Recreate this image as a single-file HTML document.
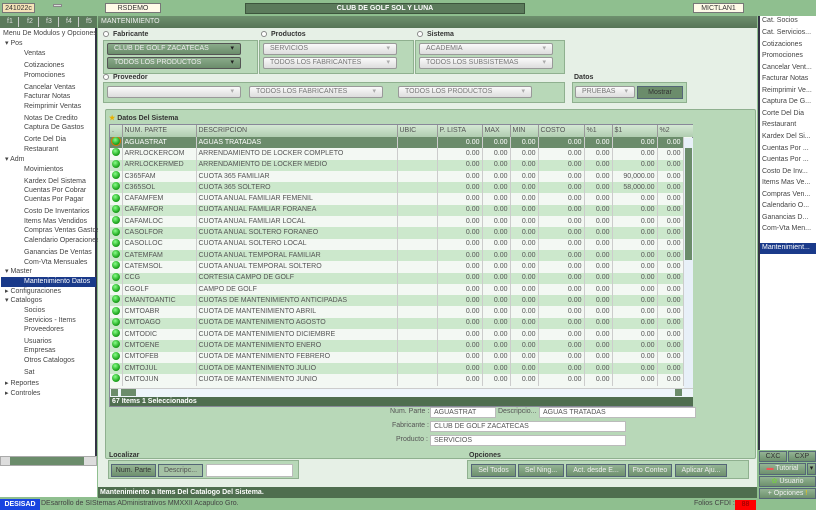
<!DOCTYPE html>
<html><head><meta charset="utf-8"><style>
*{margin:0;padding:0;box-sizing:border-box}
body{width:816px;height:510px;overflow:hidden;background:#8fbf8f;font-family:"Liberation Sans",sans-serif;font-size:7px;color:#555;position:relative}
.a{position:absolute;white-space:nowrap}
.box{position:absolute;background:#fffbe8;border:1px solid #777;text-align:center;font-size:7px;color:#333;line-height:9px}
.tree div{position:absolute;white-space:nowrap;line-height:10px;color:#444}
.rl div{position:absolute;left:4px;white-space:nowrap;line-height:10px;color:#444}
.dd{position:absolute;height:12px;border:1px solid #999;border-radius:2px;background:linear-gradient(#fafafa,#ddd);color:#777;font-size:7px;line-height:10px;padding-left:6px}
.dd:after{content:"▾";position:absolute;right:6px;top:0;color:#aaa}
.dd.g{background:linear-gradient(#8aaa8a,#6b8c6b);color:#eee;border-color:#555}
.dd.g:after{color:#222}
.grp{position:absolute;background:#b8d8b8;border:1px solid #8fb08f}
.lbl{position:absolute;font-weight:bold;color:#333;font-size:7px}
.rad{display:inline-block;width:6px;height:6px;border:1px solid #888;border-radius:50%;background:#fff;margin-right:4px;vertical-align:-1px}
table{border-collapse:collapse;table-layout:fixed;position:absolute;left:110px;top:125px;width:573px}
td{height:11.3px;padding:0 2px;border-right:1px solid #ccc;overflow:hidden;white-space:nowrap;line-height:10px;color:#555;font-size:7px}
td.n{text-align:right}
tr:nth-child(even) td{background:#cce8cc}
tr:nth-child(odd) td{background:#f3f8f3}
tr.h td{background:linear-gradient(#d4e8d4,#b0cdb0);color:#555;border-right:1px solid #999;height:12px}
tr.s td{background:#6b8c6b;color:#fff}
.dot{display:inline-block;width:8px;height:8px;border-radius:50%;background:radial-gradient(circle at 40% 35%,#8f8,#2a2 60%,#161);vertical-align:-1px}
.btn{position:absolute;height:13px;border:1px solid #567;background:linear-gradient(#93b393,#6e906e);color:#eee;text-align:center;line-height:11px;font-size:7px}
.inp{position:absolute;height:11px;background:#fff;border:1px solid #bbb;font-size:7px;line-height:9px;padding-left:3px;color:#555}
.tab{position:absolute;top:17px;color:#ddd;line-height:10px}
.sep{position:absolute;top:17px;width:1px;height:10px;background:#ccc}
</style></head><body>
<!-- top bar -->
<div class="box" style="left:2px;top:3px;width:33px;height:10px;background:#f5e3b8">241022c</div>
<div class="a" style="left:53px;top:4px;width:9px;height:3px;background:#ddd;border:1px solid #888"></div>
<div class="box" style="left:105px;top:3px;width:56px;height:10px">RSDEMO</div>
<div class="a" style="left:245px;top:3px;width:280px;height:11px;background:#5b7a5b;border:1px solid #3d553d;color:#fff;font-weight:bold;text-align:center;line-height:9px">CLUB DE GOLF SOL Y LUNA</div>
<div class="box" style="left:693px;top:3px;width:51px;height:10px">MICTLAN1</div>

<!-- left -->
<div class="a" style="left:0;top:16px;width:97px;height:12px;background:#5b7a5b"></div>
<div class="tab" style="left:7px">f1</div><div class="sep" style="left:18px"></div>
<div class="tab" style="left:27px">f2</div><div class="sep" style="left:38px"></div>
<div class="tab" style="left:46px">f3</div><div class="sep" style="left:58px"></div>
<div class="tab" style="left:66px">f4</div><div class="sep" style="left:78px"></div>
<div class="tab" style="left:86px">f5</div>
<div class="a" style="left:0;top:28px;width:97px;height:428px;background:#fff;border-right:2px solid #334"></div>
<div class="tree">
<div style="left:3px;top:29px">Menu De Modulos y Opciones</div>
<div style="left:5px;top:39px">▾ Pos</div>
<div style="left:24px;top:49px">Ventas</div>
<div style="left:24px;top:61px">Cotizaciones</div>
<div style="left:24px;top:71px">Promociones</div>
<div style="left:24px;top:83px">Cancelar Ventas</div>
<div style="left:24px;top:92px">Facturar Notas</div>
<div style="left:24px;top:102px">Reimprimir Ventas</div>
<div style="left:24px;top:114px">Notas De Credito</div>
<div style="left:24px;top:123px">Captura De Gastos</div>
<div style="left:24px;top:135px">Corte Del Dia</div>
<div style="left:24px;top:145px">Restaurant</div>
<div style="left:5px;top:155px">▾ Adm</div>
<div style="left:24px;top:165px">Movimientos</div>
<div style="left:24px;top:177px">Kardex Del Sistema</div>
<div style="left:24px;top:186px">Cuentas Por Cobrar</div>
<div style="left:24px;top:195px">Cuentas Por Pagar</div>
<div style="left:24px;top:207px">Costo De Inventarios</div>
<div style="left:24px;top:217px">Items Mas Vendidos</div>
<div style="left:24px;top:226px">Compras Ventas Gastos</div>
<div style="left:24px;top:236px">Calendario Operaciones</div>
<div style="left:24px;top:248px">Ganancias De Ventas</div>
<div style="left:24px;top:258px">Com-Vta Mensuales</div>
<div style="left:5px;top:267px">▾ Master</div>
<div style="left:1px;top:277px;width:95px;height:10px;background:#1a3a8a"></div>
<div style="left:24px;top:277px;color:#fff">Mantenimiento Datos</div>
<div style="left:5px;top:287px">▸ Configuraciones</div>
<div style="left:5px;top:296px">▾ Catalogos</div>
<div style="left:24px;top:306px">Socios</div>
<div style="left:24px;top:316px">Servicios - Items</div>
<div style="left:24px;top:325px">Proveedores</div>
<div style="left:24px;top:337px">Usuarios</div>
<div style="left:24px;top:346px">Empresas</div>
<div style="left:24px;top:356px">Otros Catalogos</div>
<div style="left:24px;top:368px">Sat</div>
<div style="left:5px;top:379px">▸ Reportes</div>
<div style="left:5px;top:389px">▸ Controles</div>
</div>
<div class="a" style="left:0;top:456px;width:97px;height:10px;background:#ddd;border:1px solid #aaa"></div>
<div class="a" style="left:10px;top:457px;width:74px;height:8px;background:#6b8c6b"></div>
<div class="a" style="left:0;top:466px;width:97px;height:31px;background:#fff"></div>

<!-- main -->
<div class="a" style="left:98px;top:16px;width:659px;height:12px;background:linear-gradient(#6e906e,#567456);color:#eee;line-height:12px;padding-left:3px">MANTENIMIENTO</div>
<div class="a" style="left:98px;top:28px;width:659px;height:459px;background:#e6f0e6"></div>

<div class="lbl" style="left:103px;top:31px"><span class="rad"></span>Fabricante</div>
<div class="grp" style="left:103px;top:40px;width:155px;height:34px"></div>
<div class="dd g" style="left:107px;top:43px;width:134px">CLUB DE GOLF ZACATECAS</div>
<div class="dd g" style="left:107px;top:57px;width:134px">TODOS LOS PRODUCTOS</div>
<div class="lbl" style="left:261px;top:31px"><span class="rad"></span>Productos</div>
<div class="grp" style="left:259px;top:40px;width:155px;height:34px"></div>
<div class="dd" style="left:263px;top:43px;width:134px">SERVICIOS</div>
<div class="dd" style="left:263px;top:57px;width:134px">TODOS LOS FABRICANTES</div>
<div class="lbl" style="left:417px;top:31px"><span class="rad"></span>Sistema</div>
<div class="grp" style="left:415px;top:40px;width:150px;height:34px"></div>
<div class="dd" style="left:419px;top:43px;width:134px">ACADEMIA</div>
<div class="dd" style="left:419px;top:57px;width:134px">TODOS LOS SUBSISTEMAS</div>
<div class="lbl" style="left:103px;top:74px"><span class="rad"></span>Proveedor</div>
<div class="grp" style="left:103px;top:82px;width:462px;height:21px"></div>
<div class="dd" style="left:107px;top:86px;width:134px"></div>
<div class="dd" style="left:249px;top:86px;width:134px">TODOS LOS FABRICANTES</div>
<div class="dd" style="left:398px;top:86px;width:134px">TODOS LOS PRODUCTOS</div>
<div class="lbl" style="left:574px;top:74px">Datos</div>
<div class="grp" style="left:572px;top:82px;width:115px;height:21px"></div>
<div class="dd" style="left:575px;top:86px;width:60px">PRUEBAS</div>
<div class="btn" style="left:637px;top:86px;width:46px;height:13px;background:#6b8c6b;color:#333">Mostrar</div>

<div class="grp" style="left:105px;top:109px;width:651px;height:350px;border-radius:2px"></div>
<div class="lbl" style="left:109px;top:114px"><span style="color:#e8b000">★</span> Datos Del Sistema</div>
<div class="a" style="left:109px;top:124px;width:584px;height:283px;background:#f3f8f3;border:1px solid #889"></div>
<table>
<colgroup><col style="width:12px"><col style="width:74px"><col style="width:201px"><col style="width:40px"><col style="width:45px"><col style="width:28px"><col style="width:28px"><col style="width:46px"><col style="width:28px"><col style="width:45px"><col style="width:26px"></colgroup>
<tr class="h"><td>.</td><td>NUM. PARTE</td><td>DESCRIPCION</td><td>UBIC</td><td>P. LISTA</td><td>MAX</td><td>MIN</td><td>COSTO</td><td>%1</td><td>$1</td><td>%2</td></tr>
<tr class="s"><td><span class="dot" style="outline:1px solid #d70"></span></td><td>AGUASTRAT</td><td>AGUAS TRATADAS</td><td></td><td class="n">0.00</td><td class="n">0.00</td><td class="n">0.00</td><td class="n">0.00</td><td class="n">0.00</td><td class="n">0.00</td><td class="n">0.00</td></tr>
<tr><td><span class="dot"></span></td><td>ARRLOCKERCOM</td><td>ARRENDAMIENTO DE LOCKER COMPLETO</td><td></td><td class="n">0.00</td><td class="n">0.00</td><td class="n">0.00</td><td class="n">0.00</td><td class="n">0.00</td><td class="n">0.00</td><td class="n">0.00</td></tr>
<tr><td><span class="dot"></span></td><td>ARRLOCKERMED</td><td>ARRENDAMIENTO DE LOCKER MEDIO</td><td></td><td class="n">0.00</td><td class="n">0.00</td><td class="n">0.00</td><td class="n">0.00</td><td class="n">0.00</td><td class="n">0.00</td><td class="n">0.00</td></tr>
<tr><td><span class="dot"></span></td><td>C365FAM</td><td>CUOTA 365 FAMILIAR</td><td></td><td class="n">0.00</td><td class="n">0.00</td><td class="n">0.00</td><td class="n">0.00</td><td class="n">0.00</td><td class="n">90,000.00</td><td class="n">0.00</td></tr>
<tr><td><span class="dot"></span></td><td>C365SOL</td><td>CUOTA 365 SOLTERO</td><td></td><td class="n">0.00</td><td class="n">0.00</td><td class="n">0.00</td><td class="n">0.00</td><td class="n">0.00</td><td class="n">58,000.00</td><td class="n">0.00</td></tr>
<tr><td><span class="dot"></span></td><td>CAFAMFEM</td><td>CUOTA ANUAL FAMILIAR FEMENIL</td><td></td><td class="n">0.00</td><td class="n">0.00</td><td class="n">0.00</td><td class="n">0.00</td><td class="n">0.00</td><td class="n">0.00</td><td class="n">0.00</td></tr>
<tr><td><span class="dot"></span></td><td>CAFAMFOR</td><td>CUOTA ANUAL FAMILIAR FORANEA</td><td></td><td class="n">0.00</td><td class="n">0.00</td><td class="n">0.00</td><td class="n">0.00</td><td class="n">0.00</td><td class="n">0.00</td><td class="n">0.00</td></tr>
<tr><td><span class="dot"></span></td><td>CAFAMLOC</td><td>CUOTA ANUAL FAMILIAR LOCAL</td><td></td><td class="n">0.00</td><td class="n">0.00</td><td class="n">0.00</td><td class="n">0.00</td><td class="n">0.00</td><td class="n">0.00</td><td class="n">0.00</td></tr>
<tr><td><span class="dot"></span></td><td>CASOLFOR</td><td>CUOTA ANUAL SOLTERO FORANEO</td><td></td><td class="n">0.00</td><td class="n">0.00</td><td class="n">0.00</td><td class="n">0.00</td><td class="n">0.00</td><td class="n">0.00</td><td class="n">0.00</td></tr>
<tr><td><span class="dot"></span></td><td>CASOLLOC</td><td>CUOTA ANUAL SOLTERO LOCAL</td><td></td><td class="n">0.00</td><td class="n">0.00</td><td class="n">0.00</td><td class="n">0.00</td><td class="n">0.00</td><td class="n">0.00</td><td class="n">0.00</td></tr>
<tr><td><span class="dot"></span></td><td>CATEMFAM</td><td>CUOTA ANUAL TEMPORAL FAMILIAR</td><td></td><td class="n">0.00</td><td class="n">0.00</td><td class="n">0.00</td><td class="n">0.00</td><td class="n">0.00</td><td class="n">0.00</td><td class="n">0.00</td></tr>
<tr><td><span class="dot"></span></td><td>CATEMSOL</td><td>CUOTA ANUAL TEMPORAL SOLTERO</td><td></td><td class="n">0.00</td><td class="n">0.00</td><td class="n">0.00</td><td class="n">0.00</td><td class="n">0.00</td><td class="n">0.00</td><td class="n">0.00</td></tr>
<tr><td><span class="dot"></span></td><td>CCG</td><td>CORTESIA CAMPO DE GOLF</td><td></td><td class="n">0.00</td><td class="n">0.00</td><td class="n">0.00</td><td class="n">0.00</td><td class="n">0.00</td><td class="n">0.00</td><td class="n">0.00</td></tr>
<tr><td><span class="dot"></span></td><td>CGOLF</td><td>CAMPO DE GOLF</td><td></td><td class="n">0.00</td><td class="n">0.00</td><td class="n">0.00</td><td class="n">0.00</td><td class="n">0.00</td><td class="n">0.00</td><td class="n">0.00</td></tr>
<tr><td><span class="dot"></span></td><td>CMANTOANTIC</td><td>CUOTAS DE MANTENIMIENTO ANTICIPADAS</td><td></td><td class="n">0.00</td><td class="n">0.00</td><td class="n">0.00</td><td class="n">0.00</td><td class="n">0.00</td><td class="n">0.00</td><td class="n">0.00</td></tr>
<tr><td><span class="dot"></span></td><td>CMTOABR</td><td>CUOTA DE MANTENIMIENTO ABRIL</td><td></td><td class="n">0.00</td><td class="n">0.00</td><td class="n">0.00</td><td class="n">0.00</td><td class="n">0.00</td><td class="n">0.00</td><td class="n">0.00</td></tr>
<tr><td><span class="dot"></span></td><td>CMTOAGO</td><td>CUOTA DE MANTENIMIENTO AGOSTO</td><td></td><td class="n">0.00</td><td class="n">0.00</td><td class="n">0.00</td><td class="n">0.00</td><td class="n">0.00</td><td class="n">0.00</td><td class="n">0.00</td></tr>
<tr><td><span class="dot"></span></td><td>CMTODIC</td><td>CUOTA DE MANTENIMIENTO DICIEMBRE</td><td></td><td class="n">0.00</td><td class="n">0.00</td><td class="n">0.00</td><td class="n">0.00</td><td class="n">0.00</td><td class="n">0.00</td><td class="n">0.00</td></tr>
<tr><td><span class="dot"></span></td><td>CMTOENE</td><td>CUOTA DE MANTENIMIENTO ENERO</td><td></td><td class="n">0.00</td><td class="n">0.00</td><td class="n">0.00</td><td class="n">0.00</td><td class="n">0.00</td><td class="n">0.00</td><td class="n">0.00</td></tr>
<tr><td><span class="dot"></span></td><td>CMTOFEB</td><td>CUOTA DE MANTENIMIENTO FEBRERO</td><td></td><td class="n">0.00</td><td class="n">0.00</td><td class="n">0.00</td><td class="n">0.00</td><td class="n">0.00</td><td class="n">0.00</td><td class="n">0.00</td></tr>
<tr><td><span class="dot"></span></td><td>CMTOJUL</td><td>CUOTA DE MANTENIMIENTO JULIO</td><td></td><td class="n">0.00</td><td class="n">0.00</td><td class="n">0.00</td><td class="n">0.00</td><td class="n">0.00</td><td class="n">0.00</td><td class="n">0.00</td></tr>
<tr><td><span class="dot"></span></td><td>CMTOJUN</td><td>CUOTA DE MANTENIMIENTO JUNIO</td><td></td><td class="n">0.00</td><td class="n">0.00</td><td class="n">0.00</td><td class="n">0.00</td><td class="n">0.00</td><td class="n">0.00</td><td class="n">0.00</td></tr>
</table>
<div class="a" style="left:683px;top:125px;width:10px;height:12px;background:linear-gradient(#d4e8d4,#b0cdb0)"></div>
<div class="a" style="left:684px;top:138px;width:9px;height:250px;background:#e8f0f8"></div>
<div class="a" style="left:685px;top:148px;width:7px;height:112px;background:#6b8c6b"></div>
<div class="a" style="left:110px;top:388px;width:583px;height:9px;background:#eef5fb;border-top:1px solid #ccc"></div>
<div class="a" style="left:111px;top:389px;width:7px;height:7px;background:#6b8c6b"></div>
<div class="a" style="left:121px;top:389px;width:15px;height:7px;background:#6b8c6b"></div>
<div class="a" style="left:675px;top:389px;width:7px;height:7px;background:#6b8c6b"></div>
<div class="a" style="left:110px;top:397px;width:583px;height:9px;background:#4f6e4f;color:#fff;font-weight:bold;line-height:9px;padding-left:2px">67 Items 1 Seleccionados</div>

<div class="a" style="left:390px;top:408px">Num. Parte :</div>
<div class="inp" style="left:430px;top:407px;width:66px">AGUASTRAT</div>
<div class="a" style="left:498px;top:408px">Descripcio...</div>
<div class="inp" style="left:539px;top:407px;width:157px">AGUAS TRATADAS</div>
<div class="a" style="left:392px;top:422px">Fabricante :</div>
<div class="inp" style="left:430px;top:421px;width:196px">CLUB DE GOLF ZACATECAS</div>
<div class="a" style="left:396px;top:436px">Producto :</div>
<div class="inp" style="left:430px;top:435px;width:196px">SERVICIOS</div>

<div class="lbl" style="left:109px;top:452px">Localizar</div>
<div class="grp" style="left:108px;top:460px;width:191px;height:19px"></div>
<div class="btn" style="left:111px;top:464px;width:45px;color:#333">Num. Parte</div>
<div class="btn" style="left:158px;top:464px;width:45px;background:#a5c2a5;color:#555">Descripc...</div>
<div class="inp" style="left:206px;top:464px;width:87px;height:13px"></div>
<div class="lbl" style="left:469px;top:452px">Opciones</div>
<div class="grp" style="left:467px;top:460px;width:282px;height:19px"></div>
<div class="btn" style="left:471px;top:464px;width:45px">Sel Todos</div>
<div class="btn" style="left:518px;top:464px;width:46px">Sel Ning...</div>
<div class="btn" style="left:566px;top:464px;width:60px">Act. desde E...</div>
<div class="btn" style="left:628px;top:464px;width:44px">Fto Conteo</div>
<div class="btn" style="left:675px;top:464px;width:52px">Aplicar Aju...</div>

<!-- right panel -->
<div class="a" style="left:758px;top:16px;width:58px;height:434px;background:#fff;border-left:2px solid #334"></div>
<div class="rl" style="position:absolute;left:758px;top:0">
<div style="top:16px">Cat. Socios</div>
<div style="top:28px">Cat. Servicios...</div>
<div style="top:40px">Cotizaciones</div>
<div style="top:51px">Promociones</div>
<div style="top:63px">Cancelar Vent...</div>
<div style="top:74px">Facturar Notas</div>
<div style="top:86px">Reimprimir Ve...</div>
<div style="top:97px">Captura De G...</div>
<div style="top:109px">Corte Del Dia</div>
<div style="top:120px">Restaurant</div>
<div style="top:132px">Kardex Del Si...</div>
<div style="top:144px">Cuentas Por ...</div>
<div style="top:155px">Cuentas Por ...</div>
<div style="top:167px">Costo De Inv...</div>
<div style="top:178px">Items Mas Ve...</div>
<div style="top:190px">Compras Ven...</div>
<div style="top:201px">Calendario O...</div>
<div style="top:213px">Ganancias D...</div>
<div style="top:224px">Com-Vta Men...</div>
<div style="top:243px;left:2px;width:56px;height:11px;background:#1a3a8a"></div>
<div style="top:243px;color:#fff">Mantenimient...</div>
</div>
<div class="btn" style="left:759px;top:451px;width:28px;height:11px;line-height:9px;color:#333">CXC</div>
<div class="btn" style="left:788px;top:451px;width:28px;height:11px;line-height:9px;color:#333">CXP</div>
<div class="btn" style="left:759px;top:463px;width:47px;height:12px;line-height:10px"><span style="color:#e55">▬</span> Tutorial</div>
<div class="btn" style="left:807px;top:463px;width:9px;height:12px;line-height:10px;color:#222">▾</div>
<div class="btn" style="left:759px;top:476px;width:57px;height:11px;line-height:9px"><span style="color:#7c4">✿</span> Usuario</div>
<div class="btn" style="left:759px;top:488px;width:57px;height:11px;line-height:9px">+ Opciones <span style="color:#fc0">!</span></div>

<!-- bottom -->
<div class="a" style="left:98px;top:487px;width:659px;height:11px;background:#4f6e4f;color:#fff;font-weight:bold;line-height:11px;padding-left:2px">Mantenimiento a Items Del Catalogo Del Sistema.</div>
<div class="a" style="left:0;top:499px;width:40px;height:11px;background:#1844e0;color:#fff;font-weight:bold;line-height:11px;text-align:center">DESISAD</div>
<div class="a" style="left:41px;top:499px;color:#444;line-height:10px">DEsarrollo de SIStemas ADministrativos MMXXII Acapulco Gro.</div>
<div class="a" style="left:694px;top:499px;color:#444;line-height:10px">Folios CFDI :</div>
<div class="a" style="left:735px;top:500px;width:21px;height:10px;background:#f00;color:#800;text-align:center;line-height:10px">88</div>
</body></html>
